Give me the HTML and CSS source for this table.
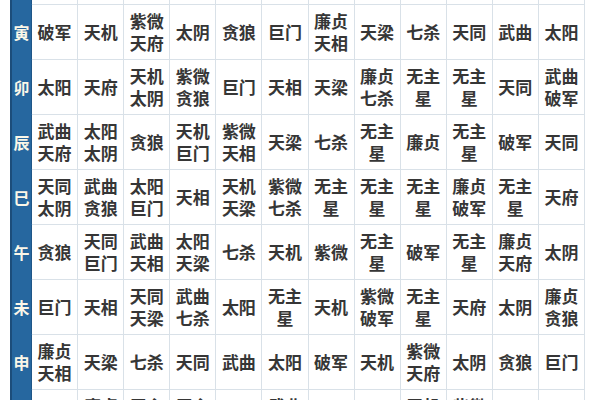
FILE: index.html
```html
<!DOCTYPE html>
<html lang="zh">
<head>
<meta charset="utf-8">
<link rel="stylesheet" href="styles.css">
</head>
<body>
<div class="frame">
<table class="stars">
<tbody>
<tr><th>丑</th><td>天机</td><td>紫微<br>破军</td><td>无主<br>星</td><td>天府</td><td>太阴</td><td>廉贞<br>贪狼</td><td>巨门</td><td>天相</td><td>天同<br>天梁</td><td>武曲<br>七杀</td><td>太阳</td><td>无主<br>星</td></tr>
<tr><th>寅</th><td>破军</td><td>天机</td><td>紫微<br>天府</td><td>太阴</td><td>贪狼</td><td>巨门</td><td>廉贞<br>天相</td><td>天梁</td><td>七杀</td><td>天同</td><td>武曲</td><td>太阳</td></tr>
<tr><th>卯</th><td>太阳</td><td>天府</td><td>天机<br>太阴</td><td>紫微<br>贪狼</td><td>巨门</td><td>天相</td><td>天梁</td><td>廉贞<br>七杀</td><td>无主<br>星</td><td>无主<br>星</td><td>天同</td><td>武曲<br>破军</td></tr>
<tr><th>辰</th><td>武曲<br>天府</td><td>太阳<br>太阴</td><td>贪狼</td><td>天机<br>巨门</td><td>紫微<br>天相</td><td>天梁</td><td>七杀</td><td>无主<br>星</td><td>廉贞</td><td>无主<br>星</td><td>破军</td><td>天同</td></tr>
<tr><th>巳</th><td>天同<br>太阴</td><td>武曲<br>贪狼</td><td>太阳<br>巨门</td><td>天相</td><td>天机<br>天梁</td><td>紫微<br>七杀</td><td>无主<br>星</td><td>无主<br>星</td><td>无主<br>星</td><td>廉贞<br>破军</td><td>无主<br>星</td><td>天府</td></tr>
<tr><th>午</th><td>贪狼</td><td>天同<br>巨门</td><td>武曲<br>天相</td><td>太阳<br>天梁</td><td>七杀</td><td>天机</td><td>紫微</td><td>无主<br>星</td><td>破军</td><td>无主<br>星</td><td>廉贞<br>天府</td><td>太阴</td></tr>
<tr><th>未</th><td>巨门</td><td>天相</td><td>天同<br>天梁</td><td>武曲<br>七杀</td><td>太阳</td><td>无主<br>星</td><td>天机</td><td>紫微<br>破军</td><td>无主<br>星</td><td>天府</td><td>太阴</td><td>廉贞<br>贪狼</td></tr>
<tr><th>申</th><td>廉贞<br>天相</td><td>天梁</td><td>七杀</td><td>天同</td><td>武曲</td><td>太阳</td><td>破军</td><td>天机</td><td>紫微<br>天府</td><td>太阴</td><td>贪狼</td><td>巨门</td></tr>
<tr><th>酉</th><td>天梁</td><td>廉贞<br>七杀</td><td>无主<br>星</td><td>无主<br>星</td><td>天同</td><td>武曲<br>破军</td><td>太阳</td><td>天府</td><td>天机<br>太阴</td><td>紫微<br>贪狼</td><td>巨门</td><td>天相</td></tr>
</tbody>
</table>
</div>
</body>
</html>
```

FILE: styles.css
```css
html, body {
  margin: 0;
  padding: 0;
  background: #ffffff;
}

.frame {
  width: 600px;
  height: 400px;
  overflow: hidden;
  padding-left: 10px;
  box-sizing: border-box;
}

.stars {
  margin-top: -51px;
  border-collapse: collapse;
  table-layout: fixed;
  width: 575px;
  font-family: "Noto Sans CJK SC", "Noto Sans", sans-serif;
}

.stars th {
  width: 19px;
  height: 54px;
  padding: 0;
  background: #26679f;
  color: #fbf7e8;
  font-size: 16px;
  font-weight: 700;
  border-left: 2px solid #1c4d7a;
  border-right: 1px solid #1f5687;
  border-top: 1px solid #26679f;
  border-bottom: 1px solid #26679f;
}

.stars td {
  width: 45px;
  height: 54px;
  padding: 0;
  text-align: center;
  vertical-align: middle;
  color: #363636;
  font-size: 17px;
  font-weight: 700;
  line-height: 22px;
  border: 1px solid #d9e1e8;
}
```
